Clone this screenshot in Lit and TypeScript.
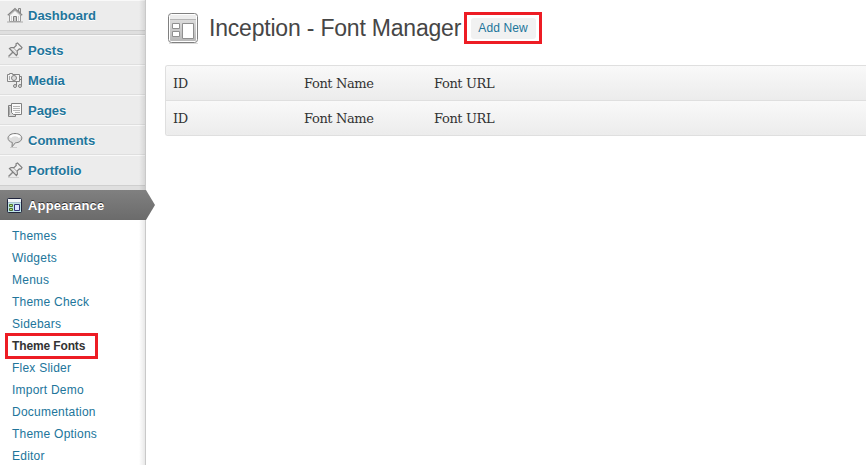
import { LitElement, html, css, svg } from "lit";
import { customElement } from "lit/decorators.js";
import { classMap } from "lit/directives/class-map.js";

const pin = svg`
  <path d="M1 15.500h11" stroke="#d0d0d0"/>
  <path d="M1.500 14.500L6 10" stroke="#888" stroke-width="1.500"/>
  <path d="M2.500 6.500L4 5.500l3 .2 2.200-2.200-.2-1.700L10.500 1l4.500 4.500-1 1.500-1.700-.2-2.200 2.200.3 3-1 1.500z" fill="#f0f0f0" stroke="#808080" stroke-width="1.200"/>
  <path d="M6.500 6l3.500 3.500" stroke="#999"/>
  <path d="M5 7.500l3.500 3.500" stroke="#ccc"/>`;

const icons: Record<string, unknown> = {
  home: svg`
    <path d="M2.500 8v6.500h11V8L8 3z" fill="#f6f6f6" stroke="#999"/>
    <path d="M11.500 1.500h2V6l-2-2z" fill="#ddd" stroke="#888"/>
    <path d="M.8 8.300L8 1.600l7.200 6.700" stroke="#858585" stroke-width="1.300" fill="none"/>
    <path d="M3 8.300L8 3.800l5 4.500" stroke="#d0d0d0" fill="none"/>
    <path d="M6.500 14V9.500h3V14" fill="#ccc" stroke="#808080"/>
    <path d="M4.500 9v5M11.500 9v5" stroke="#ccc"/>
    <path d="M0 15h16" stroke="#aaa"/>`,
  pin,
  media: svg`
    <path d="M.5 2.500h2v-1h3v1h7v7H.5z" fill="#f3f3f3" stroke="#858585"/>
    <circle cx="7" cy="6" r="2.500" fill="#ddd" stroke="#808080"/>
    <path d="M2.500 4v4" stroke="#aaa"/>
    <path d="M9.500 14V9.500M14.500 14V4.500h-2M14.500 7.500H12" stroke="#808080" fill="none"/>
    <circle cx="8" cy="14" r="1.500" fill="#ddd" stroke="#808080"/>
    <circle cx="13" cy="14" r="1.500" fill="#ddd" stroke="#808080"/>`,
  pages: svg`
    <path d="M1.500 3.500h7v11h-7z" fill="#d8d8d8" stroke="#808080"/>
    <path d="M4.500 1.500h10v11h-8l-2-2z" fill="#fafafa" stroke="#808080"/>
    <path d="M6 4.500h7M6 6.500h7M6 8.500h7M8 10.500h5" stroke="#b5b5b5"/>
    <path d="M2.500 5v8" stroke="#aaa"/>`,
  comment: svg`
    <path d="M3 15.500h7" stroke="#ccc"/>
    <path d="M8 1.500c4 0 6.800 2 6.800 4.600 0 2.700-2.800 4.600-6.300 4.600L5 14.800l.3-4.300C2.700 9.800 1 8.200 1 6.100 1 3.500 4 1.500 8 1.500z" fill="#dedede" stroke="#808080"/>
    <path d="M3.200 5.500C4.500 2.600 11.500 2.600 12.800 5.500" stroke="#fff" stroke-width="2" fill="none"/>`,
  layout: svg`
    <rect x=".5" y=".5" width="14" height="14" rx="1" fill="#bfe3e6" stroke="#20243c"/>
    <path d="M1 1h13v3H1z" fill="#f2f5f9"/>
    <path d="M1 4.500h13" stroke="#a9bfd0"/>
    <path d="M2.500 6.500h3v2h-3zM2.500 10.500h3v2h-3z" fill="#b6e07a" stroke="#4d7033"/>
    <path d="M7.500 6.500h5v6h-5z" fill="#dde4ff" stroke="#34357a"/>`,
};

const groups = [
  [["home", "Dashboard"]],
  [["pin", "Posts"], ["media", "Media"], ["pages", "Pages"], ["comment", "Comments"], ["pin", "Portfolio"]],
];
const submenu = ["Themes", "Widgets", "Menus", "Theme Check", "Sidebars", "Theme Fonts", "Flex Slider",
  "Import Demo", "Documentation", "Theme Options", "Editor"];

@customElement("app-root")
export class AppRoot extends LitElement {
  static styles = css`
    :host { display: flex; height: 465px; overflow: hidden; background: #fff;
      font-family: "Liberation Sans", Arial, sans-serif; }
    *, *::before { box-sizing: border-box; }
    .side { position: relative; width: 146px; flex: none; height: 465px; }
    .shade { position: absolute; top: 0; right: 0; width: 7px; height: 465px; border-right: 1px solid #c9c9c9;
      background: linear-gradient(90deg, rgba(0,0,0,0), rgba(0,0,0,.09)); }
    .group { background: #ececec; border-bottom: 1px solid #cfcfcf; }
    .item { display: flex; align-items: center; height: 30px; padding: 1px 0 0 7px; gap: 5px;
      font-weight: bold; font-size: 13px; line-height: 18px; color: #21759b;
      border-top: 1px solid #f9f9f9; border-bottom: 1px solid #dfdfdf; text-shadow: 0 1px 0 #fff; }
    .item:last-child { border-bottom-color: #ececec; }
    .item svg { width: 16px; height: 16px; flex: none; fill: none; margin-bottom: 1px; }
    .sep { height: 4px; background: #dfdfdf; }
    .sep.line { border-bottom: 1px solid #cfcfcf; }
    .current { position: relative; z-index: 1; display: flex; align-items: center; gap: 5px; height: 30px;
      width: 155px; padding-left: 7px; font-weight: bold; font-size: 13px; letter-spacing: .2px; color: #fff;
      background: linear-gradient(#808080, #6b6b6b); text-shadow: 0 -1px 0 #333;
      clip-path: polygon(0 0, 146px 0, 155px 15px, 146px 30px, 0 30px); }
    .current svg { width: 16px; height: 16px; flex: none; fill: none; margin-top: 2px; }
    .sub { padding: 5px 0 0 12px; }
    .link { height: 22px; line-height: 22px; font-size: 12px; letter-spacing: .23px; color: #21759b; white-space: nowrap; }
    .link.on { position: relative; font-weight: bold; color: #333; letter-spacing: -.13px; }
    .link.on::before { content: ""; position: absolute; left: -7px; top: -2px; width: 93px; height: 26px;
      border: 3px solid #ed1c24; }
    .main { flex: 1; min-width: 0; padding: 12px 0 0 19px; }
    .head { display: flex; align-items: center; height: 32px; }
    .head svg { width: 32px; height: 32px; margin-left: 3px; flex: none; }
    h1 { margin: 0 0 0 9px; width: 255px; font-weight: normal; font-size: 23px; line-height: 32px; color: #464646;
      letter-spacing: -.2px; white-space: nowrap; }
    .mark { display: flex; align-items: center; justify-content: center; width: 78px; height: 32px; border: 3px solid #ed1c24; }
    .add { width: 65px; height: 21px; border-radius: 3px; background: #f1f1f1; color: #21759b; font-size: 12px;
      line-height: 21px; text-align: center; letter-spacing: .1px; }
    .table { margin-top: 21px; border: 1px solid #dfdfdf; border-right: 0; border-radius: 3px 0 0 3px; overflow: hidden; }
    .row { display: grid; grid-template-columns: 131px 130px 1fr; height: 34px; padding-left: 7px;
      background: linear-gradient(#f9f9f9, #ececec); color: #333; line-height: 36px;
      font-family: "DejaVu Serif", Georgia, serif; font-size: 13px; letter-spacing: -.38px; }
    .row + .row { height: 35px; border-top: 1px solid #dfdfdf; }
  `;

  icon(name: string) {
    return html`<svg viewBox="0 0 16 16">${icons[name]}</svg>`;
  }

  render() {
    const row = html`<div class="row"><span>ID</span><span>Font Name</span><span>Font URL</span></div>`;
    return html`
      <nav class="side">
        ${groups.map((g, i) => html`
          <div class="group">${g.map(([ic, label]) => html`<div class="item">${this.icon(ic)}<span>${label}</span></div>`)}</div>
          <div class=${classMap({ sep: true, line: i === 0 })}></div>`)}
        <div class="shade"></div>
        <div class="current">${this.icon("layout")}<span>Appearance</span></div>
        <div class="sub">
          ${submenu.map((s) => html`<div class=${classMap({ link: true, on: s === "Theme Fonts" })}>${s}</div>`)}
        </div>
      </nav>
      <main class="main">
        <div class="head">
          <svg viewBox="0 0 32 32" fill="none">
            <defs><linearGradient id="g" x2="0" y2="1"><stop stop-color="#e4e4e4"/><stop offset="1" stop-color="#b8b8b8"/></linearGradient></defs>
            <path d="M1 31.500h29" stroke="#ddd"/>
            <rect x=".5" y="1.500" width="29" height="29" rx="3" fill="#fff" stroke="#808080"/>
            <rect x="2" y="3" width="26" height="26" rx="1" fill="url(#g)"/>
            <path d="M2 3h26v4H2z" fill="#ededed"/>
            <path d="M2 7.500h26" stroke="#b5b5b5"/>
            <path d="M4.500 11.500h7v5h-7zM4.500 19.500h7v5h-7zM14.500 11.500h11v15h-11z" fill="#fff" stroke="#909090"/>
          </svg>
          <h1>Inception - Font Manager</h1>
          <div class="mark"><div class="add">Add New</div></div>
        </div>
        <div class="table">${row}${row}</div>
      </main>`;
  }
}
